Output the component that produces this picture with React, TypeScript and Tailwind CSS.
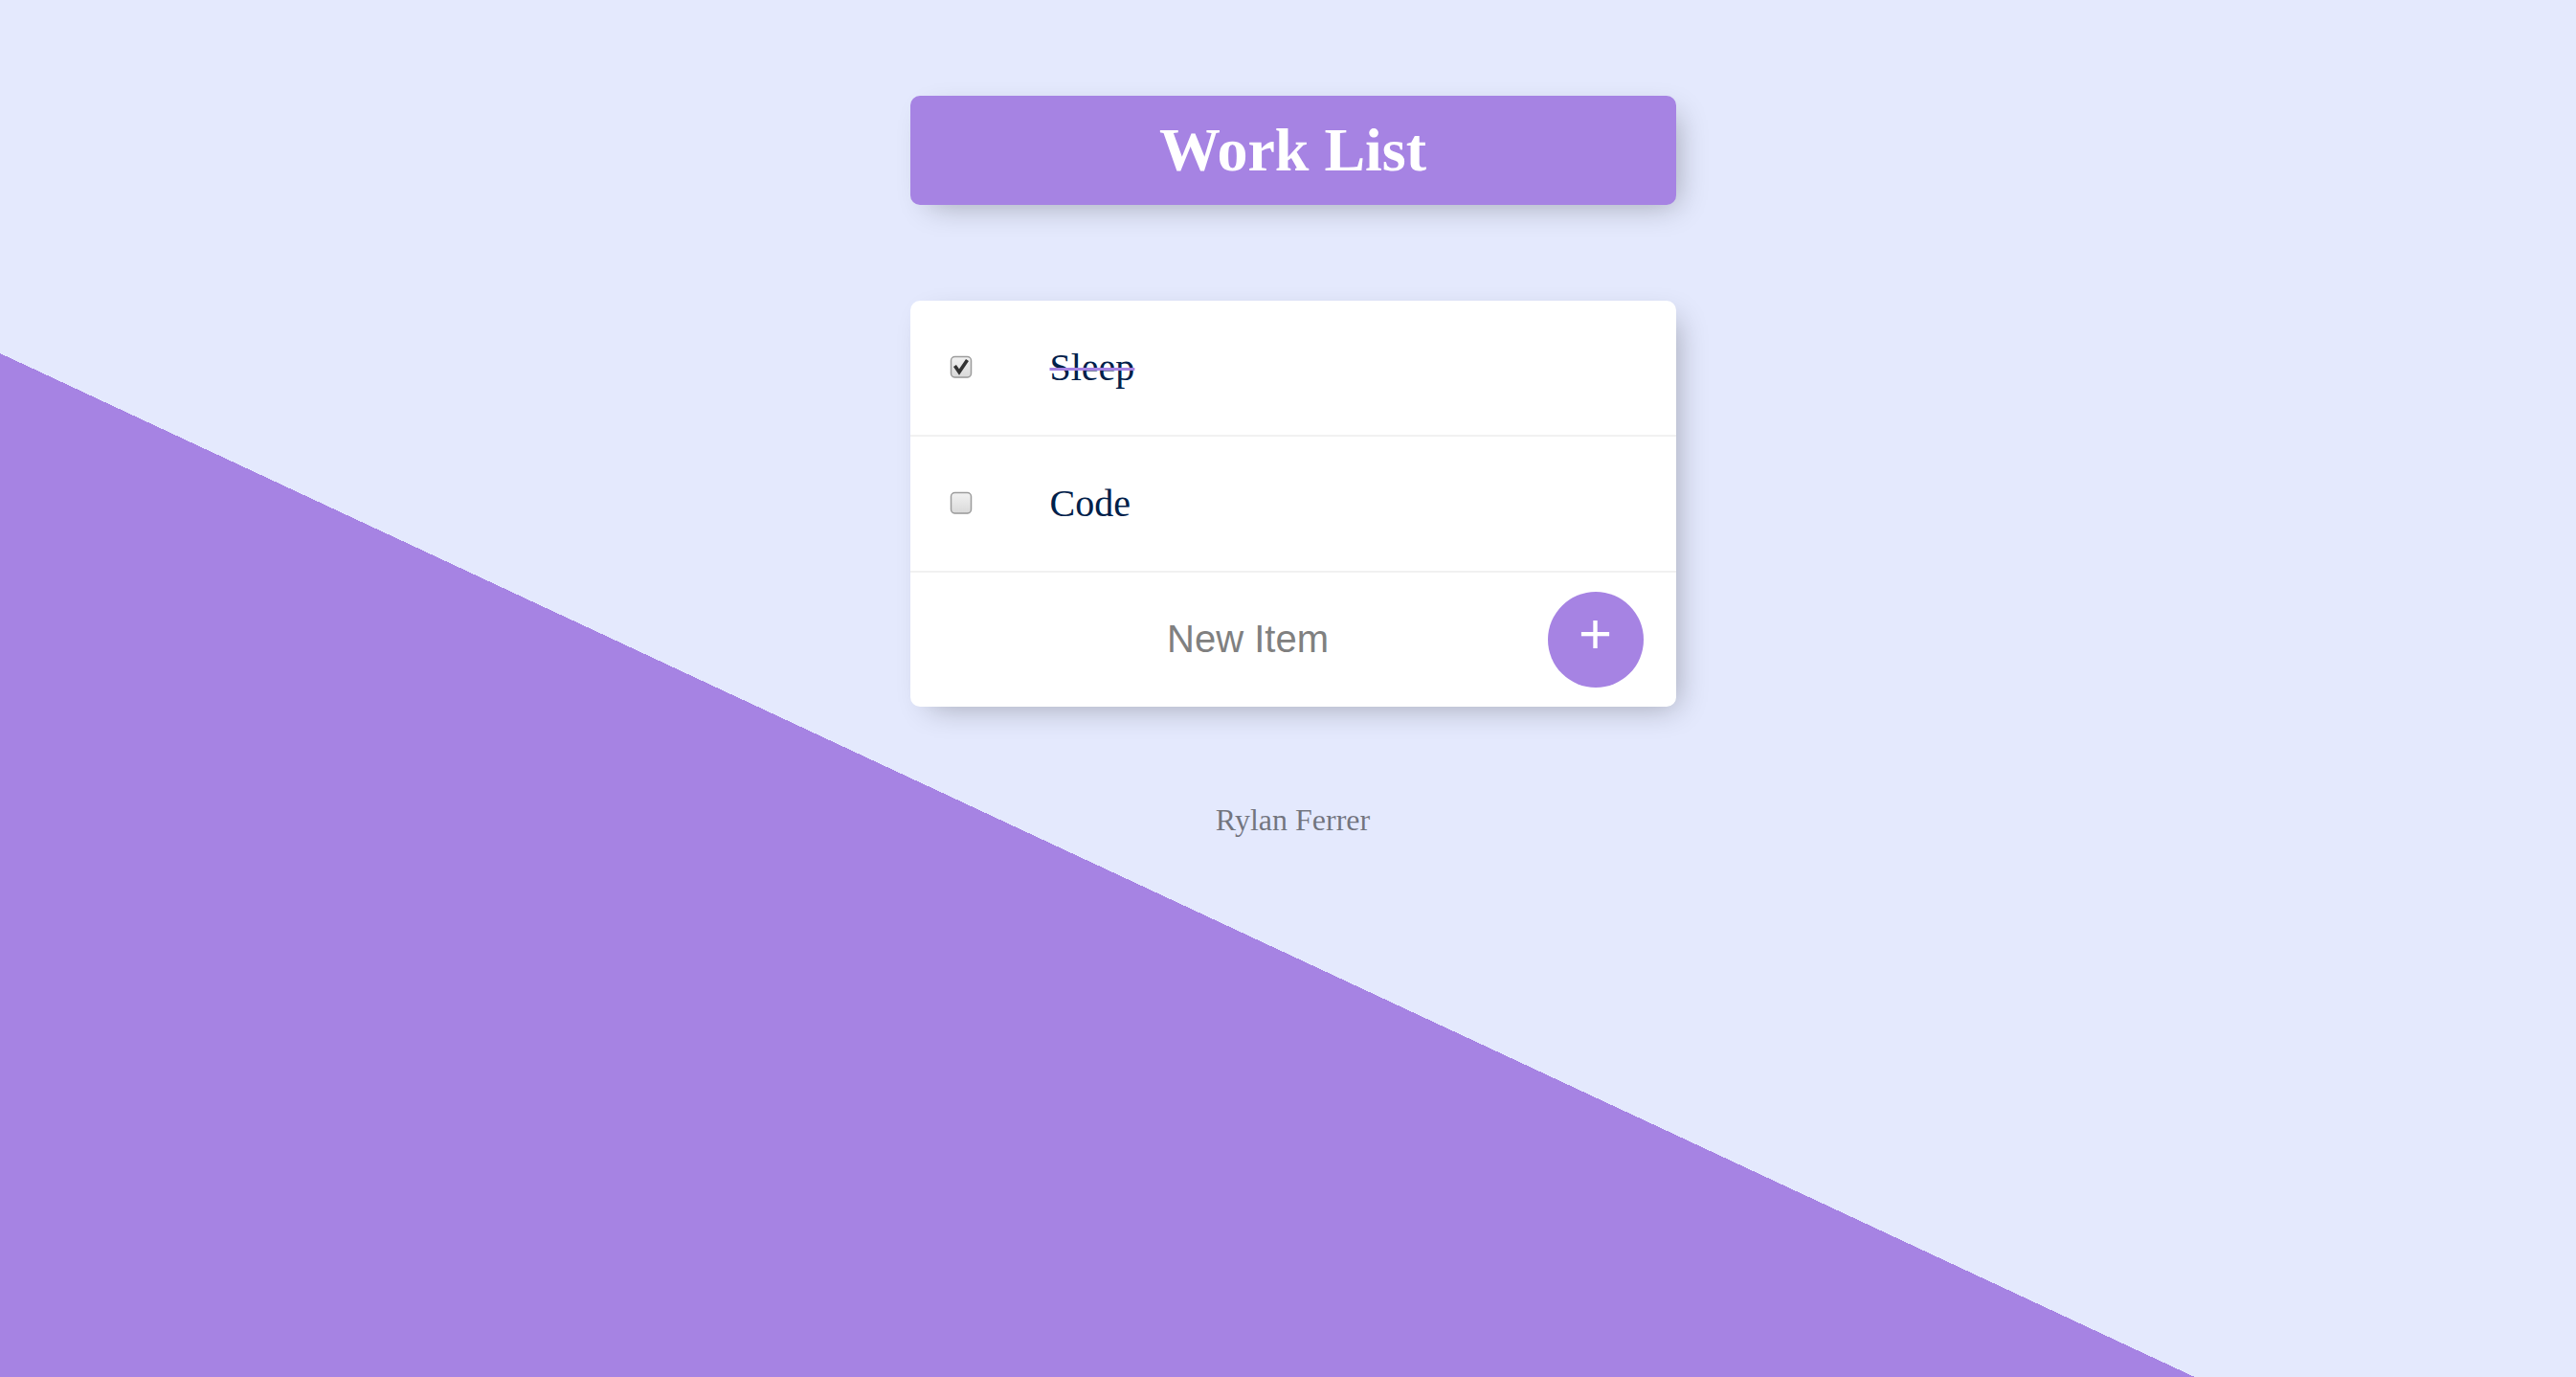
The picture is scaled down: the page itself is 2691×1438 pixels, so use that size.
import { useState } from "react";

type Item = { id: number; label: string; done: boolean };

const initialItems: Item[] = [
  { id: 1, label: "Sleep", done: true },
  { id: 2, label: "Code", done: false },
];

function Checkbox({ checked, onToggle }: { checked: boolean; onToggle: () => void }) {
  return (
    <button
      type="button"
      onClick={onToggle}
      className="m-[40px] h-[26px] w-[26px] shrink-0 p-0"
      aria-checked={checked}
      role="checkbox"
    >
      <svg viewBox="0 0 26 26" className="h-[26px] w-[26px]">
        <defs>
          <linearGradient id="cbfill" x1="0" y1="0" x2="0" y2="1">
            <stop offset="0" stopColor="#f2f2f2" />
            <stop offset="1" stopColor="#d9d9d9" />
          </linearGradient>
        </defs>
        <rect x="2.5" y="2" width="21" height="22" rx="4" fill="#e6e6e6" />
        <rect x="2.5" y="1.5" width="21" height="21.5" rx="4" fill="url(#cbfill)" stroke="#9c9c9c" strokeWidth="1.5" />
        {checked && (
          <path d="M7.5 12.5 L11 17.5 L18.5 6.5" fill="none" stroke="#333" strokeWidth="3.6" strokeLinecap="square" />
        )}
      </svg>
    </button>
  );
}

export default function App() {
  const [items, setItems] = useState<Item[]>(initialItems);

  const toggle = (id: number) =>
    setItems((prev) => prev.map((it) => (it.id === id ? { ...it, done: !it.done } : it)));

  return (
    <div className="h-screen w-full overflow-hidden bg-[#E4E9FD] bg-[linear-gradient(25deg,#A683E3_39.7%,#E4E9FD_39.7%)] pl-[10px] font-['Liberation_Serif','Times_New_Roman',serif]">
      <div className="mx-auto mt-[100px] max-w-[800px] rounded-[10px] bg-[#A683E3] text-center shadow-[10px_10px_30px_-10px_rgba(0,0,0,0.3)]">
        <h1 className="p-[20px] text-[64px] leading-[73.6px] font-bold text-white">Work List</h1>
      </div>

      <div className="mx-auto mt-[100px] max-w-[800px] rounded-[10px] bg-white shadow-[10px_10px_30px_-10px_rgba(0,0,0,0.3)]">
        {items.map((item) => (
          <div key={item.id} className="flex min-h-[140px] items-center border-b-2 border-[#F1F1F1]">
            <Checkbox checked={item.done} onToggle={() => toggle(item.id)} />
            <p
              className={
                item.done
                  ? "p-[40px] text-[40px] text-[#00204a] line-through decoration-[#A683E3] decoration-3"
                  : "p-[40px] text-[40px] text-[#00204a]"
              }
            >
              {item.label}
            </p>
          </div>
        ))}
        <form className="ml-[40px] flex min-h-[140px] items-center" onSubmit={(e) => e.preventDefault()}>
          <input
            type="text"
            placeholder="New Item"
            className="h-[120px] w-[626px] border-none bg-transparent text-center font-['Liberation_Sans',Arial,sans-serif] text-[40px] outline-none placeholder:text-[grey]"
          />
          <button
            type="submit"
            className="flex h-[100px] w-[100px] items-center justify-center rounded-full bg-[#A683E3] pb-[12px] font-['Liberation_Sans',Arial,sans-serif] text-[60px] leading-none text-white"
          >
            +
          </button>
        </form>
      </div>

      <footer className="mt-[100px] text-center text-[32px] leading-[36.8px] text-black/50">Rylan Ferrer</footer>
    </div>
  );
}
